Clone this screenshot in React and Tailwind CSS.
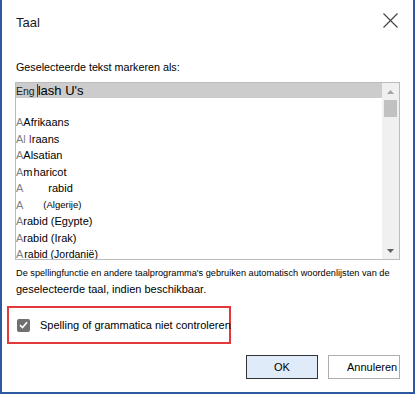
import React from 'react';

const Gray = ({ children }) => <span className="text-[#808080]">{children}</span>;

const items = [
  <><Gray>A</Gray><span>Afrikaans</span></>,
  <><Gray>Al</Gray><span className="ml-[3px]"><span className="text-[#6b2a6b]">I</span>raans</span></>,
  <><Gray>A</Gray><span>Alsatian</span></>,
  <><Gray>A</Gray><span>m</span><span className="ml-[1px]">haricot</span></>,
  <><Gray>A</Gray><span className="ml-[25px]">rabid</span></>,
  <><Gray>A</Gray><span className="ml-[20px] text-[9.5px]">(Algerije)</span></>,
  <><Gray>A</Gray><span>rabid (Egypte)</span></>,
  <><Gray>A</Gray><span>rabid (Irak)</span></>,
  <><Gray>A</Gray><span className="ml-[1px] text-[10.5px]">rabid (Jordanië)</span></>,
];

const LanguageList = () => (
  <div className="mt-[8px] -ml-[1px] w-[385px] h-[178px] border border-[#bcbcbc] flex overflow-hidden">
    <div className="w-[366px] flex flex-col">
      <div className="h-[16px] bg-[#cccccc] flex items-end whitespace-nowrap">
        <span className="text-[10.5px] leading-[14px] text-[#222]">Eng</span>
        <span className="w-[1px] h-[13px] bg-[#6b2a6b] ml-[2px] mb-[1px]"></span>
        <span className="text-[13px] leading-[15px] text-black">lash U's</span>
      </div>
      <div className="mt-[9px] h-[1px] bg-[#6a6a6a]"></div>
      <div className="mt-[7px] flex flex-col text-[11px] leading-[16.5px] text-black">
        {items.map((item, i) => (
          <div key={i} className="h-[16.5px] whitespace-nowrap flex items-center">
            {item}
          </div>
        ))}
      </div>
    </div>
    <div className="w-[17px] bg-[#f0f0f0] flex flex-col items-center">
      <div className="h-[17px] flex items-center justify-center">
        <svg width="7" height="4" viewBox="0 0 7 4">
          <path d="M3.5 0 L7 4 L0 4 Z" fill="#a3a3a3" />
        </svg>
      </div>
      <div className="w-[13px] h-[17px] bg-[#c1c1c1]"></div>
      <div className="flex-1"></div>
      <div className="h-[17px] flex items-center justify-center">
        <svg width="7" height="4" viewBox="0 0 7 4">
          <path d="M0 0 L7 0 L3.5 4 Z" fill="#606060" />
        </svg>
      </div>
    </div>
  </div>
);

const App = () => {
  return (
    <div className="w-[415px] h-[394px] bg-white border-l-2 border-r-2 border-b-2 border-[#2c5aa0] font-['Liberation_Sans',Arial,sans-serif] text-black flex flex-col px-[14px] overflow-hidden">
      <div className="flex justify-between items-start pt-[13px]">
        <h1 className="mt-[2px] text-[13px] leading-[16px] text-[#1a1a1a]">Taal</h1>
        <svg width="15" height="15" viewBox="0 0 15 15" className="mr-[1px]">
          <path d="M0.5 0.5 L14.5 14.5 M14.5 0.5 L0.5 14.5" stroke="#404040" strokeWidth="1.1" />
        </svg>
      </div>

      <p className="mt-[29px] text-[10.75px] leading-[14px]">Geselecteerde tekst markeren als:</p>

      <LanguageList />

      <p className="mt-[7px] text-[9.2px] leading-[12px] whitespace-nowrap">
        De spellingfunctie en andere taalprogramma's gebruiken automatisch woordenlijsten van de
      </p>
      <p className="mt-[2px] text-[11px] leading-[16px]">geselecteerde taal, indien beschikbaar.</p>

      <div className="mt-[9px] -ml-[9px] w-[224px] h-[38px] border-2 border-[#e5383d] flex items-center pl-[8px]">
        <span className="w-[13px] h-[13px] rounded-[2px] bg-[#707070] flex items-center justify-center shrink-0">
          <svg width="9" height="8" viewBox="0 0 9 8">
            <path d="M1 4.2 L3.5 6.5 L8 1.2" stroke="white" strokeWidth="1.6" fill="none" />
          </svg>
        </span>
        <span className="ml-[10px] text-[11px] leading-[16px] whitespace-nowrap">
          Spelling of grammatica niet controleren
        </span>
      </div>

      <div className="mt-[11px] -mr-[1px] flex justify-end gap-[10px]">
        <button className="w-[72px] h-[24px] bg-[#e0ebf9] border border-[#333] text-[11px] leading-[14px]">
          OK
        </button>
        <button className="w-[72px] h-[24px] bg-white border border-[#adadad] text-[11px] leading-[14px] text-left pl-[18px]">
          Annuleren
        </button>
      </div>
    </div>
  );
};

export default App;
